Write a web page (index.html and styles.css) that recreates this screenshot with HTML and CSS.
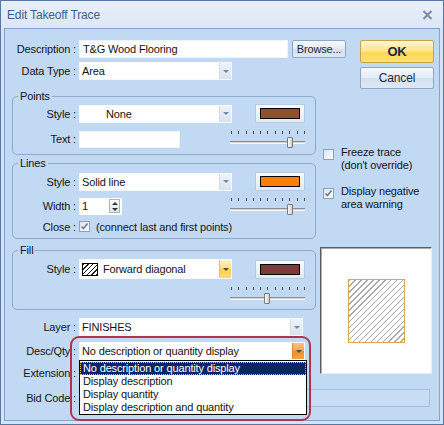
FILE: index.html
```html
<!DOCTYPE html>
<html lang="en">
<head>
    <meta charset="UTF-8">
    <meta name="viewport" content="width=device-width, initial-scale=1.0">
    <title>Edit Takeoff Trace</title>
    <link rel="stylesheet" href="styles.css">
</head>
<body>
    <div class="window">
        <div class="titlebar">
            <span class="title">Edit Takeoff Trace</span>
            <svg class="close" width="11" height="10" viewBox="0 0 11 10">
                <path d="M1.5 1 L9.5 9 M9.5 1 L1.5 9" stroke="#8090a6" stroke-width="2.2"/>
            </svg>
        </div>

        <div class="client">
            <div class="top">
                <div class="top-fields">
                    <div class="row">
                        <span class="lbl">Description :</span>
                        <div class="text desc-text">T&amp;G Wood Flooring</div>
                        <div class="btn browse">Browse...</div>
                    </div>
                    <div class="row">
                        <span class="lbl">Data Type :</span>
                        <div class="combo"><span class="combo-value">Area</span><span class="combo-arrow"></span></div>
                    </div>
                </div>
                <div class="actions">
                    <div class="btn ok">OK</div>
                    <div class="btn cancel">Cancel</div>
                </div>
            </div>

            <div class="main">
                <div class="left">
                    <fieldset class="group points">
                        <legend>Points</legend>
                        <div class="g-row">
                            <div class="field">
                                <span class="lbl">Style :</span>
                                <div class="combo"><span class="combo-value none">None</span><span class="combo-arrow"></span></div>
                            </div>
                            <div class="swatch"><span class="swatch-points"></span></div>
                        </div>
                        <div class="g-row">
                            <div class="field">
                                <span class="lbl">Text :</span>
                                <div class="text point-text"></div>
                            </div>
                            <div class="slider">
                                <div class="ticks"></div>
                                <div class="track"></div>
                                <div class="thumb" style="left: 79%"></div>
                            </div>
                        </div>
                    </fieldset>

                    <fieldset class="group lines">
                        <legend>Lines</legend>
                        <div class="g-row">
                            <div class="field">
                                <span class="lbl">Style :</span>
                                <div class="combo"><span class="combo-value">Solid line</span><span class="combo-arrow"></span></div>
                            </div>
                            <div class="swatch"><span class="swatch-lines"></span></div>
                        </div>
                        <div class="g-row">
                            <div class="field">
                                <span class="lbl">Width :</span>
                                <div class="spin">
                                    <span>1</span>
                                    <span class="spin-btns"><i class="up"></i><i class="down"></i></span>
                                </div>
                            </div>
                            <div class="slider">
                                <div class="ticks"></div>
                                <div class="track"></div>
                                <div class="thumb" style="left: 79%"></div>
                            </div>
                        </div>
                        <div class="g-row short">
                            <div class="field">
                                <span class="lbl">Close :</span>
                                <span class="check on">
                                    <svg width="9" height="9" viewBox="0 0 9 9"><path d="M1.5 4.5 L3.5 6.5 L7.5 1.5" fill="none" stroke="#6a7e9e" stroke-width="1.6"/></svg>
                                </span>
                                <span class="check-text">(connect last and first points)</span>
                            </div>
                        </div>
                    </fieldset>

                    <fieldset class="group fill">
                        <legend>Fill</legend>
                        <div class="g-row">
                            <div class="field">
                                <span class="lbl">Style :</span>
                                <div class="combo tall"><span class="combo-value"><span class="hatch"></span>Forward diagonal</span><span class="combo-arrow hot"></span></div>
                            </div>
                            <div class="swatch"><span class="swatch-fill"></span></div>
                        </div>
                        <div class="g-row end">
                            <div class="slider">
                                <div class="ticks"></div>
                                <div class="track"></div>
                                <div class="thumb" style="left: 49%"></div>
                            </div>
                        </div>
                    </fieldset>

                    <div class="row layer-row">
                        <span class="lbl">Layer :</span>
                        <div class="combo layer-combo"><span class="combo-value">FINISHES</span><span class="combo-arrow"></span></div>
                    </div>

                    <div class="row desc-row">
                        <span class="lbl">Desc/Qty :</span>
                        <div class="combo desc-combo">
                            <span class="combo-value">No description or quantity display</span>
                            <span class="combo-arrow pressed"></span>
                            <div class="dropdown">
                                <div class="item selected">No description or quantity display</div>
                                <div class="item">Display description</div>
                                <div class="item">Display quantity</div>
                                <div class="item">Display description and quantity</div>
                            </div>
                        </div>
                        <div class="callout"></div>
                    </div>

                    <div class="row ext-row">
                        <span class="lbl">Extension :</span>
                        <div class="text ext-text"></div>
                    </div>
                </div>

                <div class="right">
                    <div class="opt freeze">
                        <span class="check"></span>
                        <span>Freeze trace<br>(don't override)</span>
                    </div>
                    <div class="opt negative">
                        <span class="check on">
                            <svg width="9" height="9" viewBox="0 0 9 9"><path d="M1.5 4.5 L3.5 6.5 L7.5 1.5" fill="none" stroke="#6a7e9e" stroke-width="1.6"/></svg>
                        </span>
                        <span>Display negative<br>area warning</span>
                    </div>
                    <div class="preview">
                        <div class="preview-shape"></div>
                    </div>
                </div>
            </div>

            <div class="row bid-row">
                <span class="lbl">Bid Code :</span>
                <div class="text bid-text"></div>
            </div>
        </div>
    </div>
</body>
</html>
```

FILE: styles.css
```css
:root {
    --body-bg: #c2d9f3;
    --frame-bg: #d4e3f6;
    --group-border: #8eaacd;
    --text-color: #141414;
}

* {
    box-sizing: border-box;
}

body {
    margin: 0;
    font-family: "Liberation Sans", Arial, sans-serif;
    font-size: 11px;
    letter-spacing: -0.15px;
    color: var(--text-color);
    background: #ffffff;
}

/* window chrome */
.window {
    width: 444px;
    height: 425px;
    border: 1px solid #58779f;
    background: var(--frame-bg);
    display: flex;
    flex-direction: column;
}

.titlebar {
    height: 27px;
    flex: none;
    display: flex;
    align-items: center;
    justify-content: space-between;
    padding: 0 10px 0 6px;
    background: linear-gradient(#e8eff9, #dce7f5);
}

.title {
    font-size: 12px;
    color: #3f5e89;
}

.client {
    flex: 1;
    position: relative;
    margin: 0 3px 3px;
    padding: 11px 5px 0 7px;
    border: 1px solid #86a2c7;
    background: var(--body-bg);
}

/* generic rows and controls */
.row {
    display: flex;
    align-items: center;
    height: 18px;
}

.lbl {
    flex: none;
    width: 64px;
    margin-right: 3px;
    text-align: right;
    white-space: nowrap;
}

.text {
    height: 18px;
    padding: 0 3px;
    line-height: 16px;
    background: #ffffff;
    border: 1px solid #eef3f9;
    white-space: nowrap;
}

.btn {
    display: flex;
    align-items: center;
    justify-content: center;
    border: 1px solid #8fa6c6;
    border-radius: 2px;
    background: linear-gradient(#f6f9fd, #e3ebf5 50%, #d5e1f0 51%, #dee8f4);
    color: #1b293c;
}

.combo {
    display: flex;
    width: 153px;
    height: 18px;
    background: #ffffff;
    border: 1px solid #f5f8fc;
}

.combo.tall {
    height: 20px;
}

.combo-value {
    flex: 1;
    display: flex;
    align-items: center;
    gap: 5px;
    padding-left: 2px;
    white-space: nowrap;
    overflow: hidden;
}

.combo-value.none {
    padding-left: 26px;
}

.combo-arrow {
    flex: none;
    width: 12px;
    display: flex;
    align-items: center;
    justify-content: center;
    background: linear-gradient(#eef3f9, #d8e3f0);
    border-left: 1px solid #d0dcea;
}

.combo-arrow::before {
    content: '';
    border-left: 3px solid transparent;
    border-right: 3px solid transparent;
    border-top: 3px solid #6f88ab;
}

.combo-arrow.hot {
    background: linear-gradient(#fff3c4, #ffdf7a 50%, #ffd04c 51%, #ffdc6e);
    border-left-color: #e3c26c;
}

.combo-arrow.pressed {
    background: linear-gradient(#fcc27a, #f9a24c 50%, #f58a2c 51%, #f9a04a);
    border-left-color: #d98a3e;
}

.combo-arrow.hot::before,
.combo-arrow.pressed::before {
    border-top-color: #5a4a30;
}

/* top section */
.top {
    display: flex;
    justify-content: space-between;
}

.top-fields {
    display: flex;
    flex-direction: column;
    gap: 4px;
}

.desc-text {
    width: 209px;
}

.browse {
    width: 54px;
    height: 18px;
    margin-left: 4px;
}

.actions {
    width: 74px;
    display: flex;
    flex-direction: column;
    gap: 4px;
}

.ok {
    height: 23px;
    font-size: 13px;
    font-weight: bold;
    border-color: #c4a44d;
    background: linear-gradient(#fff6cf, #ffe38a 50%, #ffd553 51%, #ffe17a);
}

.cancel {
    height: 22px;
    font-size: 12px;
}

/* main area */
.main {
    display: grid;
    grid-template-columns: 304px 114px;
    column-gap: 4px;
}

.group {
    margin: 1px 0 0;
    padding: 1px 9px 5px 0;
    border: 1px solid var(--group-border);
    border-radius: 5px;
    min-width: 0;
}

.group legend {
    margin-left: 5px;
    padding: 0 2px;
    line-height: 13px;
}

.group .lbl {
    width: 63px;
}

.lines {
    margin-top: 2px;
    padding-top: 2px;
}

.fill {
    margin-top: 5px;
    padding-top: 2px;
    padding-bottom: 4px;
}

.g-row {
    display: flex;
    align-items: center;
    justify-content: space-between;
}

.g-row + .g-row {
    margin-top: 6px;
}

.lines .g-row + .g-row {
    margin-top: 5px;
}

.lines .g-row.short {
    margin-top: 4px;
}

.g-row.end {
    justify-content: flex-end;
}

.field {
    display: flex;
    align-items: center;
}

.point-text {
    width: 101px;
    height: 17px;
}

.hatch {
    flex: none;
    width: 16px;
    height: 13px;
    border: 1px solid #000;
    background: repeating-linear-gradient(135deg, #1a1a1a 0 1px, #fff 1px 3.3px);
}

/* colour picker buttons */
.swatch {
    width: 50px;
    height: 19px;
    margin-right: 1px;
    padding: 3px 4px;
    border: 1px solid #b9cae0;
    background: linear-gradient(#f8fafd, #e2eaf4);
}

.swatch span {
    display: block;
    height: 100%;
    border: 1px solid #000;
}

.swatch-points {
    background: #91502f;
}

.swatch-lines {
    background: #ff7f00;
}

.swatch-fill {
    background: #7b3b38;
}

/* transparency sliders */
.slider {
    position: relative;
    width: 77px;
    height: 20px;
}

.ticks {
    position: absolute;
    left: 2px;
    top: 2px;
    width: 74px;
    height: 3px;
    background: repeating-linear-gradient(to right, #4c4c4c 0 1px, transparent 1px 7.3px);
}

.track {
    position: absolute;
    left: 1px;
    right: 1px;
    top: 12px;
    height: 3px;
    border-top: 1px solid #8d8d8d;
    border-bottom: 1px solid #f6f9fd;
    background: #d4d4d4;
}

.thumb {
    position: absolute;
    top: 8px;
    width: 6px;
    height: 11px;
    margin-left: -3px;
    border: 1px solid #7a7a7a;
    border-radius: 1px;
    background: linear-gradient(to right, #fbfbfb, #cdcdcd);
}

/* width spinner */
.spin {
    width: 43px;
    height: 17px;
    display: flex;
    align-items: center;
    justify-content: space-between;
    padding: 0 2px 0 3px;
    background: #ffffff;
}

.spin-btns {
    width: 11px;
    height: 14px;
    display: flex;
    flex-direction: column;
    border: 1px solid #a3b6cf;
    background: linear-gradient(#fbfcfe, #dde6f1);
}

.spin-btns i {
    flex: 1;
    display: flex;
    align-items: center;
    justify-content: center;
}

.spin-btns i.up::before {
    content: '';
    border-left: 3px solid transparent;
    border-right: 3px solid transparent;
    border-bottom: 3px solid #333;
}

.spin-btns i.down::before {
    content: '';
    border-left: 3px solid transparent;
    border-right: 3px solid transparent;
    border-top: 3px solid #333;
}

/* checkboxes */
.check {
    flex: none;
    width: 11px;
    height: 11px;
    display: flex;
    align-items: center;
    justify-content: center;
    border: 1px solid #8fa0b9;
    background: linear-gradient(135deg, #dbe3ee, #ffffff);
}

.check-text {
    margin-left: 6px;
}

.g-row.short {
    height: 13px;
}

/* bottom fields */
.layer-row {
    margin-top: 8px;
}

.layer-combo {
    width: 224px;
}

.desc-row {
    position: relative;
    margin-top: 6px;
}

.desc-combo {
    position: relative;
    width: 226px;
}

.ext-row {
    margin-top: 4px;
}

.ext-text {
    width: 224px;
}

.bid-row {
    margin-top: 7px;
}

.bid-text {
    width: 351px;
    background: #c8dcf4;
    border-color: #a8bedb;
}

/* open list of the Desc/Qty combo */
.dropdown {
    position: absolute;
    left: -1px;
    top: calc(100% + 1px);
    z-index: 2;
    width: 228px;
    padding-top: 1px;
    border: 1px solid #000;
    background: #ffffff;
}

.item {
    height: 13px;
    line-height: 13px;
    padding-left: 3px;
    white-space: nowrap;
}

.item.selected {
    background: #0a246a;
    color: #ffffff;
    outline: 1px dotted #e2c36e;
    outline-offset: -1px;
}

.callout {
    position: absolute;
    left: 58px;
    top: -6px;
    z-index: 3;
    width: 241px;
    height: 85px;
    border: 2px solid #b3334f;
    border-radius: 9px;
}

/* right column */
.right {
    display: flex;
    flex-direction: column;
}

.opt {
    display: flex;
    align-items: flex-start;
    gap: 7px;
    margin-left: 3px;
    line-height: 13px;
}

.opt .check {
    margin-top: 3px;
}

.opt.freeze {
    margin-top: 57px;
}

.opt.negative {
    margin-top: 13px;
}

.preview {
    width: 112px;
    height: 127px;
    margin-top: 36px;
    display: flex;
    align-items: center;
    justify-content: center;
    background: #ffffff;
    border: 1px solid;
    border-color: #5f5f5f #e4ecf6 #e4ecf6 #5f5f5f;
    box-shadow: inset 1px 1px 0 #a9a9a9;
}

.preview-shape {
    width: 57px;
    height: 64px;
    border: 1px solid #dba650;
    background: repeating-linear-gradient(135deg, #a8a8a8 0 1px, #ffffff 1px 4.2px);
}
```
